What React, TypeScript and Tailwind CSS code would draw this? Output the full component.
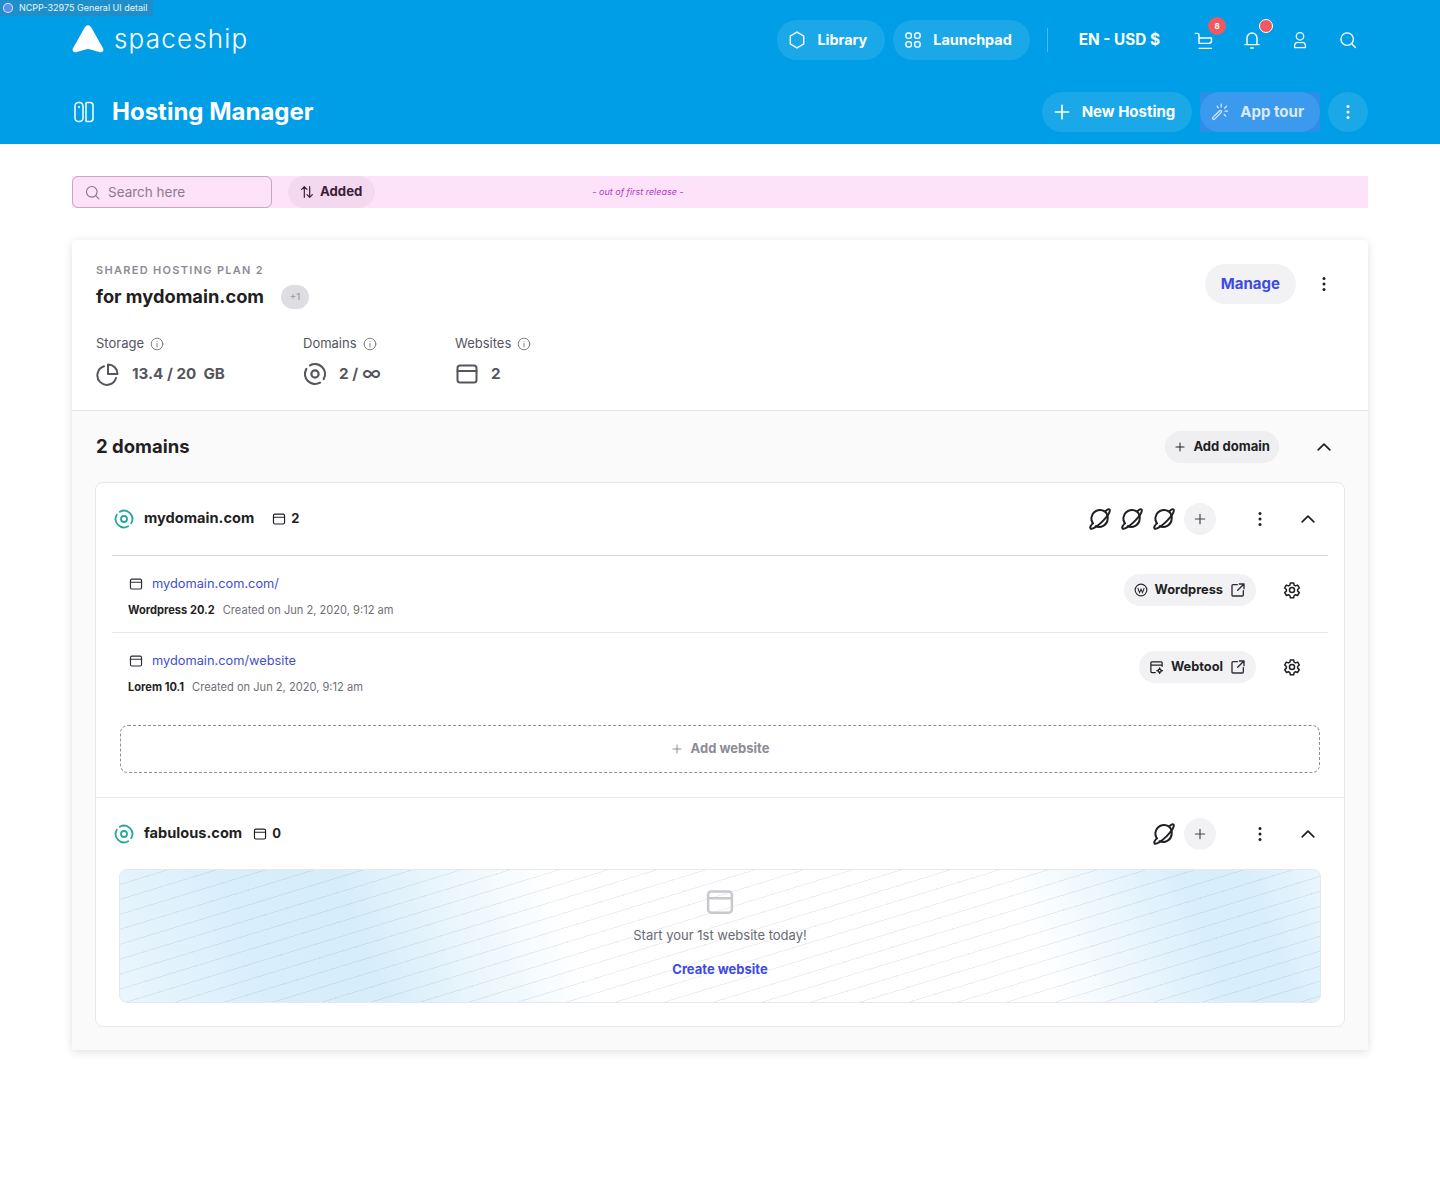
import React from "react";

type P = { className?: string };

const S = ({ className, children, vb = "0 0 24 24", sw = 2 }: P & { children: React.ReactNode; vb?: string; sw?: number }) => (
  <svg viewBox={vb} className={className} fill="none" stroke="currentColor" strokeWidth={sw} strokeLinecap="round" strokeLinejoin="round">
    {children}
  </svg>
);

const Win = ({ className, sw = 2 }: P & { sw?: number }) => (
  <S className={className} sw={sw}>
    <rect x="2.5" y="3.5" width="19" height="17" rx="2.5" />
    <path d="M2.5 9h19" />
  </S>
);

const Disc = ({ className, sw = 2.2 }: P & { sw?: number }) => (
  <S className={className} sw={sw}>
    <path d="M7 3.34A10 10 0 0 1 20.66 17" />
    <path d="M17 20.66A10 10 0 0 1 3.34 7" />
    <circle cx="12" cy="12" r="3.6" />
  </S>
);

const Planet = () => (
  <S className="w-6 h-6 text-[#1f1f24]" sw={2}>
    <path d="M4.9 16.5A8.6 8.6 0 0 1 17 4.6a8.6 8.6 0 0 1 2.6 7.9 8.6 8.6 0 0 1-12 6.7" />
    <path d="M17.2 4.5C18.5 2.7 20.5 1.7 21.5 2.6c1.4 1.3-1.7 6.6-7 11.8-5.300 5.300-10.600 8.300-12 7-.9-.9.2-3 2.300-5" />
  </S>
);

const Dots = ({ className }: P) => (
  <svg viewBox="0 0 4 16" className={className} fill="currentColor">
    <circle cx="2" cy="2.500" r="1.500" />
    <circle cx="2" cy="8" r="1.500" />
    <circle cx="2" cy="13.500" r="1.500" />
  </svg>
);

const Plus = ({ className }: P) => (
  <S className={className}>
    <path d="M12 4v16M4 12h16" />
  </S>
);

const Chevron = () => (
  <S className="w-5 h-5 text-[#1f1f24]" sw={2}>
    <path d="M5 15.500l7-7 7 7" />
  </S>
);

const External = () => (
  <S className="w-4 h-4 text-[#2c2c33]" sw={2}>
    <path d="M11 4H4.500A1.500 1.500 0 0 0 3 5.500V20a1 1 0 0 0 1 1h14.500a1.500 1.500 0 0 0 1.500-1.500V13" />
    <path d="M14 3h7v7M21 3l-9.500 9.500" />
  </S>
);

const Gear = () => (
  <S className="w-[18px] h-[18px] text-[#1f1f24]" sw={2}>
    <path d="M9.800 2.500h4.400l.6 2.900 1.900 1.100 2.800-1 2.200 3.800-2.200 2v2.200l2.200 2-2.200 3.800-2.800-1-1.900 1.100-.6 2.900H9.800l-.6-2.900-1.900-1.100-2.800 1-2.200-3.800 2.200-2v-2.200l-2.200-2 2.200-3.800 2.800 1 1.900-1.100z" />
    <circle cx="12" cy="12" r="3.400" />
  </S>
);

const Info = () => (
  <S className="w-[14px] h-[14px] text-[#6f6f78]" sw={1.500}>
    <circle cx="12" cy="12" r="10" />
    <path d="M12 11v6M12 7.500v.1" />
  </S>
);

const Stat = ({ label, icon, value, className }: { label: string; icon: React.ReactNode; value: React.ReactNode; className: string }) => (
  <div className={className}>
    <div className="flex items-center gap-[6px] h-[20px] text-[13px] text-[#55555e]">
      {label} <Info />
    </div>
    <div className="flex items-center gap-3 mt-[8px] h-6 text-[15.200px] font-bold text-[#55555e] whitespace-pre">
      {icon}
      {value}
    </div>
  </div>
);

const Row = ({ url, name, date, tool, toolIcon, border }: { url: string; name: string; date: string; tool: string; toolIcon: React.ReactNode; border?: boolean }) => (
  <div className={`flex items-start justify-between h-[77px] pt-[18px] pl-4 pr-[27px] ${border ? "border-b border-[#e8e8ec]" : ""}`}>
    <div>
      <div className="flex items-center gap-[9px] h-5 text-[12.800px] text-[#3f4fd0]">
        <Win className="w-[14px] h-[14px] ml-px text-[#2c2c33]" />
        {url}
      </div>
      <div className="flex items-center gap-2 mt-[7px] h-[18px] text-[11.100px] text-[#6f6f78]">
        <span className="font-bold text-[#1f1f24]">{name}</span>
        {date}
      </div>
    </div>
    <div className="flex items-center gap-[27px]">
      <div className="flex items-center gap-[7px] h-8 pl-[10px] pr-[10px] rounded-full bg-[#f2f2f5] text-[12.800px] font-bold text-[#1f1f24]">
        {toolIcon}
        {tool}
        <External />
      </div>
      <Gear />
    </div>
  </div>
);

const AddPlanet = () => (
  <div className="flex items-center justify-center w-8 h-8 rounded-full bg-[#f2f2f5]">
    <Plus className="w-[14px] h-[14px] text-[#44444c]" />
  </div>
);

const DomainHead = ({ name, count, gap, children }: { name: string; count: string; gap: string; children: React.ReactNode }) => (
  <div className="flex items-center justify-between h-[72px] pl-[2px] pr-[10px]">
    <div className={`flex items-center font-bold text-[#1f1f24] text-[14.600px] ${gap}`}>
      <div className="flex items-center gap-[10px]">
        <Disc className="w-5 h-5 text-[#2aa79b]" />
        {name}
      </div>
      <div className="flex items-center gap-[5px] text-[13px]">
        <Win className="w-[14px] h-[14px]" />
        {count}
      </div>
    </div>
    <div className="flex items-center">
      <div className="flex items-center gap-2">{children}</div>
      <Dots className="w-1 h-4 ml-[42px] text-[#1f1f24]" />
      <div className="ml-[36px]">
        <Chevron />
      </div>
    </div>
  </div>
);

const HeaderPill = ({ icon, label }: { icon: React.ReactNode; label: string }) => (
  <div className="flex items-center gap-[10px] h-10 pl-[10px] pr-[18px] rounded-full bg-white/10 text-[14.400px] font-bold">
    {icon}
    {label}
  </div>
);

export default function App() {
  return (
    <div className="relative min-h-[1197px] bg-white font-['Inter','Liberation_Sans',sans-serif]">
      <div className="absolute left-0 top-0 flex items-center gap-[6px] h-[16px] pl-[3px] pr-[6px] bg-[#1e8fca] text-[9px] text-white/90">
        <span className="w-[10px] h-[10px] rounded-full bg-[#5b8ff0] border border-white/80" />
        NCPP-32975 General UI detail
      </div>

      <header className="h-[144px] bg-[#009ee6] px-[72px] text-white">
        <div className="flex items-center justify-between h-[80px]">
          <div className="flex items-center gap-[10px] -mt-[2px]">
            <svg viewBox="0 0 32 28" className="w-8 h-7" fill="#fff">
              <path d="M12.800 2.300c1.500-2.700 4.900-2.700 6.400 0l11.800 21c1.200 2.200-.5 4.500-2.800 3.900L17.500 24.300a6 6 0 0 0-3 0L3.800 27.200C1.500 27.800-.2 25.500 1 23.300z" />
            </svg>
            <span className="text-[26px] font-light tracking-[1.200px] leading-none">spaceship</span>
          </div>
          <div className="flex items-center">
            <HeaderPill icon={<S className="w-5 h-5" sw={1.700}><path d="M12 2.500l8 4.700v9.600l-8 4.700-8-4.700V7.200z" /></S>} label="Library" />
            <div className="ml-2">
              <HeaderPill
                icon={
                  <S className="w-5 h-5" sw={1.700}>
                    <rect x="3.500" y="3.500" width="6.500" height="6.500" rx="2.500" />
                    <rect x="14" y="3.500" width="6.500" height="6.500" rx="2.500" />
                    <rect x="3.500" y="14" width="6.500" height="6.500" rx="2.500" />
                    <rect x="14" y="14" width="6.500" height="6.500" rx="2.500" />
                  </S>
                }
                label="Launchpad"
              />
            </div>
            <div className="w-px h-6 ml-[17px] mr-4 bg-white/30" />
            <span className="ml-[15px] text-[15.300px] font-bold">EN - USD $</span>
            <div className="relative ml-[34px]">
              <S className="w-5 h-5" sw={1.700}>
                <path d="M1.500 4H4a2 2 0 0 1 2 2v10h12a3 3 0 0 0 3-3V9.500H6M6 22h15" />
              </S>
              <span className="absolute -top-[13px] left-[14px] flex items-center justify-center w-[18px] h-[18px] rounded-full bg-[#ee5a62] text-[8px] font-bold">8</span>
            </div>
            <div className="relative ml-[28px]">
              <S className="w-5 h-5" sw={1.700}>
                <path d="M6 17V9.500a6 6 0 0 1 12 0V17M3.500 17.500h17M10.500 21.500h3" />
              </S>
              <span className="absolute -top-[11px] left-[17px] w-[14px] h-[14px] rounded-full bg-[#f0595f] border border-white" />
            </div>
            <S className="w-5 h-5 ml-[28px]" sw={1.500}>
              <circle cx="12" cy="7.500" r="4.500" />
              <path d="M5.500 21v-2.500a4 4 0 0 1 4-3.500h5a4 4 0 0 1 4 3.500V21M5.500 21h13" />
            </S>
            <S className="w-5 h-5 ml-[28px] mr-[10px]" sw={1.600}>
              <circle cx="11" cy="11" r="7.500" />
              <path d="M16.500 16.500L21 21" />
            </S>
          </div>
        </div>
        <div className="flex items-center justify-between h-[64px]">
          <div className="flex items-center gap-[16px]">
            <S className="w-6 h-6" sw={1.500}>
              <rect x="3" y="2.500" width="8" height="19" rx="3.500" />
              <path d="M14 3.300c0-.5.400-.8.800-.8H18a3 3 0 0 1 3 3v13a3 3 0 0 1-3 3h-3.200a.8.8 0 0 1-.8-.8zM7 6.500v1" />
            </S>
            <h1 className="text-[24px] font-bold leading-none">Hosting Manager</h1>
          </div>
          <div className="flex items-center gap-2">
            <div className="flex items-center gap-[10px] h-10 pl-[10px] pr-[17px] rounded-full bg-white/10 text-[15px] font-bold">
              <Plus className="w-5 h-5" />
              New Hosting
            </div>
            <div className="bg-[#2b8fea]">
              <div className="flex items-center gap-[10px] h-10 pl-[10px] pr-4 rounded-full bg-[#3b99ee] text-[15px] font-bold text-[#dbe9fb]">
                <S className="w-5 h-5" sw={1.500}>
                  <path d="M3.500 18.500l8-8a1.400 1.400 0 0 1 2 2l-8 8a1.400 1.400 0 0 1-2-2zM13.500 2.500v3.500M21 11h-3M20 5l-2.500 2.500M19 17l-2-2M8.500 5l1.500 2" />
                </S>
                App tour
              </div>
            </div>
            <div className="flex items-center justify-center w-10 h-10 rounded-full bg-white/10">
              <Dots className="w-1 h-4" />
            </div>
          </div>
        </div>
      </header>

      <main className="px-[72px] pt-8">
        <div className="flex items-center h-8 bg-[#fde2fa]">
          <div className="flex items-center gap-[7px] w-[200px] h-8 pl-[11px] pr-3 rounded-[6px] border border-[#c9a6c4] text-[13.500px] text-[#8b7b8b]">
            <S className="w-[17px] h-[17px] text-[#7d7480]" sw={1.500}>
              <circle cx="11" cy="11" r="7.500" />
              <path d="M16.500 16.500L21 21" />
            </S>
            Search here
          </div>
          <div className="flex items-center gap-[5px] h-8 ml-4 pl-[11px] pr-[13px] rounded-full bg-[#f3d8ef] text-[13.200px] font-bold text-[#3b1f3a]">
            <S className="w-4 h-4" sw={1.800}>
              <path d="M8 20V4M4 8l4-4 4 4M16 4v16M12 16l4 4 4-4" />
            </S>
            Added
          </div>
          <span className="ml-[217px] text-[9px] italic text-[#b03cc2]">- out of first release -</span>
        </div>

        <section className="mt-8 h-[810px] rounded-[4px] bg-white shadow-[0_2px_10px_rgba(0,0,0,0.13)]">
          <div className="relative h-[171px] px-6 pt-6 border-b border-[#e4e4e8]">
            <div className="text-[11px] font-semibold tracking-[1.300px] text-[#8c8c94] leading-[12px]">SHARED HOSTING PLAN 2</div>
            <div className="flex items-center gap-[17px] mt-[7px] h-7">
              <span className="text-[18.300px] font-bold text-[#1f1f24]">for mydomain.com</span>
              <span className="flex items-center justify-center w-[28px] h-6 rounded-full bg-[#dedee2] text-[9.500px] font-semibold text-[#a2a2aa]">+1</span>
            </div>
            <div className="flex mt-[23px]">
              <Stat
                className="w-[207px]"
                label="Storage"
                icon={
                  <S className="w-6 h-6" sw={2}>
                    <path d="M8 4.300A9.500 9.500 0 1 0 20 16" />
                    <path d="M12 2.500v9.500h9.500A9.500 9.500 0 0 0 12 2.500z" />
                  </S>
                }
                value="13.4 / 20  GB"
              />
              <Stat
                className="w-[152px]"
                label="Domains"
                icon={<Disc className="w-6 h-6" />}
                value={
                  <span className="flex items-center gap-[4px]">
                    2 /<span className="text-[20px] font-medium leading-none -mt-[2px]">∞</span>
                  </span>
                }
              />
              <Stat className="w-[120px]" label="Websites" icon={<Win className="w-6 h-6" />} value="2" />
            </div>
            <div className="absolute right-6 top-6 flex items-center gap-[26px]">
              <div className="flex items-center h-10 px-4 rounded-full bg-[#f2f2f5] text-[15px] font-bold text-[#3d4ae6]">Manage</div>
              <Dots className="w-1 h-4 mr-[18px] text-[#1f1f24]" />
            </div>
          </div>

          <div className="h-[639px] px-6 bg-[#fafafa]">
            <div className="flex items-center justify-between h-[71px]">
              <h2 className="text-[18.500px] font-bold text-[#1f1f24]">2 domains</h2>
              <div className="flex items-center">
                <div className="flex items-center gap-[7px] h-8 pl-[9px] pr-[9px] rounded-full bg-[#efeff2] text-[13.100px] font-bold text-[#1f1f24]">
                  <Plus className="w-3 h-3" />
                  Add domain
                </div>
                <div className="ml-[35px] mr-[10px]">
                  <Chevron />
                </div>
              </div>
            </div>

            <div className="h-[545px] -mx-px rounded-[8px] border border-[#e8e8ec] bg-white">
              <div className="px-4">
                <div className="border-b border-[#d9d9de]">
                  <DomainHead name="mydomain.com" count="2" gap="gap-[18px]">
                    <Planet />
                    <Planet />
                    <Planet />
                    <AddPlanet />
                  </DomainHead>
                </div>
                <Row
                  border
                  url="mydomain.com.com/"
                  name="Wordpress 20.2"
                  date="Created on Jun 2, 2020, 9:12 am"
                  tool="Wordpress"
                  toolIcon={
                    <svg viewBox="0 0 24 24" className="w-[14px] h-[14px]" fill="none" stroke="#2c2c33" strokeWidth="2">
                      <circle cx="12" cy="12" r="10" />
                      <path d="M6.500 8.500l3 8 2.500-6 2.500 6 3-8" strokeWidth="1.800" />
                    </svg>
                  }
                />
                <Row
                  url="mydomain.com/website"
                  name="Lorem 10.1"
                  date="Created on Jun 2, 2020, 9:12 am"
                  tool="Webtool"
                  toolIcon={
                    <S className="w-[15px] h-[15px]" sw={2}>
                      <path d="M10 20H4.500A1.500 1.500 0 0 1 3 18.500v-14A1.500 1.500 0 0 1 4.500 3h15A1.500 1.500 0 0 1 21 4.500V10M3 8h18" />
                      <circle cx="17" cy="17" r="2.500" />
                      <path d="M17 12.500v2M17 19.500v2M21.500 17h-2M14.500 17h-2" />
                    </S>
                  }
                />
                <div className="flex items-center justify-center gap-2 h-12 mx-2 mt-[15px] rounded-[8px] border border-dashed border-[#8f8f97] text-[13px] font-bold text-[#8c8c94]">
                  <Plus className="w-3 h-3" />
                  Add website
                </div>
              </div>
              <div className="mt-6 border-t border-[#e8e8ec] px-4">
                <DomainHead name="fabulous.com" count="0" gap="gap-[11px]">
                  <Planet />
                  <AddPlanet />
                </DomainHead>
                <div className="flex flex-col items-center h-[134px] mx-[7px] -mt-[1px] pt-[17px] rounded-[8px] border border-[#e8e8ec] bg-[repeating-linear-gradient(163deg,transparent_0,transparent_13.300px,rgba(110,110,150,0.12)_13.300px,rgba(110,110,150,0.12)_14.300px),linear-gradient(70deg,#eaf6fd_0%,#d8eefb_12%,#d6edfa_21%,#ffffff_38%,#ffffff_75%,#d8eefb_89%,#d8eefb_94%,#eaf6fd_100%)]">
                  <Win className="w-[30px] h-[30px] text-[#c8c8ce]" />
                  <div className="mt-[9px] text-[13px] text-[#6a6a72]">Start your 1st website today!</div>
                  <div className="mt-[14px] text-[13px] font-bold text-[#3d4ae6]">Create website</div>
                </div>
              </div>
            </div>
          </div>
        </section>
      </main>
    </div>
  );
}
